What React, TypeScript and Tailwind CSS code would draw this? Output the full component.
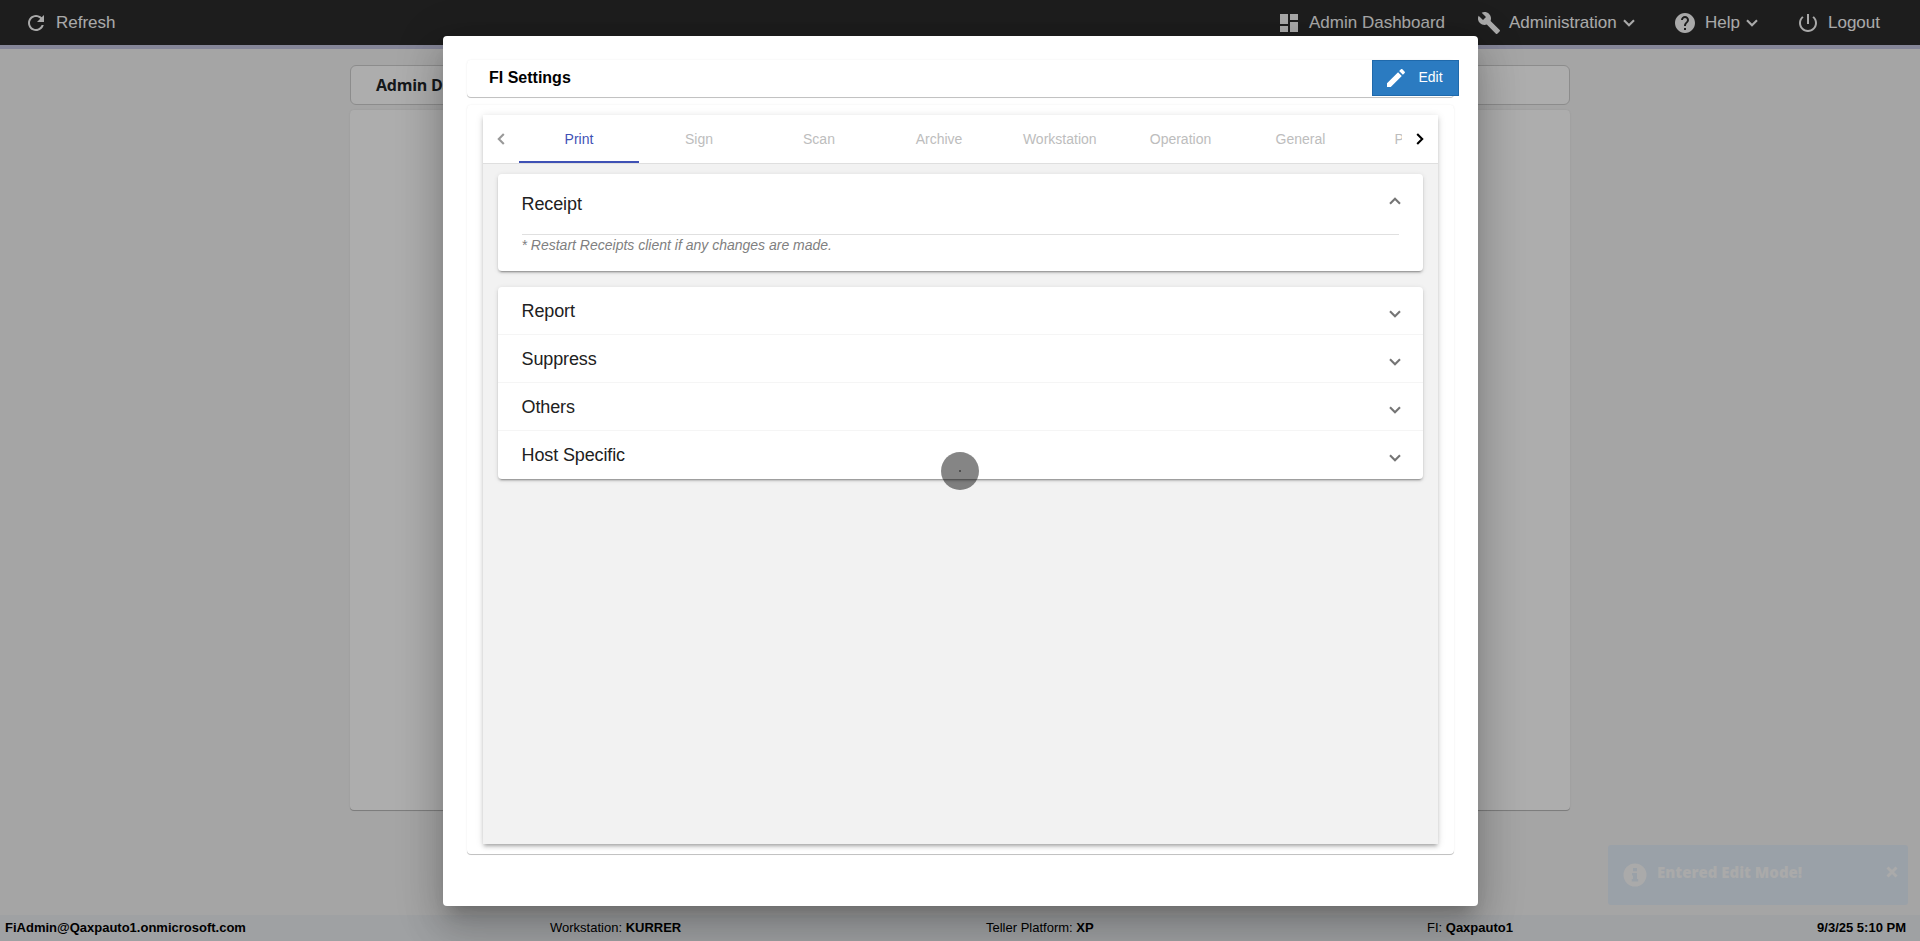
import { type ReactNode } from "react";

const SANS = "font-['Liberation_Sans',Arial,sans-serif]";

function Icon({ d, className }: { d: string; className: string }) {
  return (
    <svg viewBox="0 0 24 24" fill="currentColor" className={"shrink-0 " + className}>
      <path d={d} />
    </svg>
  );
}

const ICONS = {
  refresh:
    "M17.65 6.35C16.2 4.9 14.21 4 12 4c-4.42 0-7.99 3.58-7.99 8s3.57 8 7.99 8c3.73 0 6.84-2.55 7.73-6h-2.08c-.82 2.33-3.04 4-5.65 4-3.31 0-6-2.69-6-6s2.69-6 6-6c1.66 0 3.14.69 4.22 1.78L13 11h7V4l-2.35 2.35z",
  dashboard: "M3 13h8V3H3v10zm0 8h8v-6H3v6zm10 0h8V11h-8v10zm0-18v6h8V3h-8z",
  build:
    "M22.7 19l-9.1-9.1c.9-2.3.4-5-1.5-6.9-2-2-5-2.4-7.4-1.3L9 6 6 9 1.6 4.7C.4 7.1.9 10.1 2.9 12.1c1.9 1.9 4.6 2.4 6.9 1.5l9.1 9.1c.4.4 1 .4 1.4 0l2.3-2.3c.5-.4.5-1.1.1-1.4z",
  help:
    "M12 2C6.48 2 2 6.48 2 12s4.48 10 10 10 10-4.48 10-10S17.52 2 12 2zm1 17h-2v-2h2v2zm2.07-7.75l-.9.92C13.45 12.9 13 13.5 13 15h-2v-.5c0-1.1.45-2.1 1.17-2.83l1.24-1.26c.37-.36.59-.86.59-1.41 0-1.1-.9-2-2-2s-2 .9-2 2H8c0-2.21 1.79-4 4-4s4 1.79 4 4c0 .88-.36 1.68-.93 2.25z",
  power:
    "M13 3h-2v10h2V3zm4.83 2.17l-1.42 1.42C17.99 7.86 19 9.81 19 12c0 3.87-3.13 7-7 7s-7-3.13-7-7c0-2.19 1.01-4.14 2.58-5.42L6.17 5.17C4.23 6.82 3 9.26 3 12c0 4.97 4.03 9 9 9s9-4.03 9-9c0-2.74-1.23-5.18-3.17-6.83z",
  edit:
    "M3 17.25V21h3.75L17.81 9.94l-3.75-3.75L3 17.25zM20.71 7.04c.39-.39.39-1.02 0-1.41l-2.34-2.34c-.39-.39-1.02-.39-1.41 0l-1.83 1.83 3.75 3.75 1.83-1.83z",
};

function Chevron({ className }: { className: string }) {
  return (
    <svg viewBox="0 0 12 8" fill="none" stroke="currentColor" strokeWidth="2.1" className={"h-2 w-3 shrink-0 " + className}>
      <path d="M1 1.2L6 6.2L11 1.2" />
    </svg>
  );
}

function NavItem({ icon, label, menu, className }: { icon: ReactNode; label: string; menu?: boolean; className: string }) {
  return (
    <div className={"flex shrink-0 items-center whitespace-nowrap " + className}>
      {icon}
      <span>{label}</span>
      {menu && <Chevron className="ml-1.5" />}
    </div>
  );
}

const TABS = ["Print", "Sign", "Scan", "Archive", "Workstation", "Operation", "General", "Platform"];
const SECTIONS = ["Report", "Suppress", "Others", "Host Specific"];
const CARD = "shadow-[0_1px_0_0_rgba(0,0,0,0.18),0_1px_1px_0_rgba(0,0,0,0.06),0_0_2px_0_rgba(0,0,0,0.08)]";
const PANEL = "shadow-[0_3px_1px_-2px_rgba(0,0,0,0.2),0_2px_2px_0_rgba(0,0,0,0.14),0_1px_5px_0_rgba(0,0,0,0.12)]";

function Page() {
  return (
    <div className="flex h-full flex-col bg-[#f3f3f3]">
      <header className="flex h-[49px] shrink-0 border-b-4 border-[#c4c6e0] bg-[#2c2c2c] text-[17px] text-[#fafafa]">
        <NavItem className="ml-6" label="Refresh" icon={<Icon d={ICONS.refresh} className="mr-2 size-6" />} />
        <div className="grow" />
        <NavItem className="w-[200px]" label="Admin Dashboard" icon={<Icon d={ICONS.dashboard} className="mr-2 size-6" />} />
        <NavItem className="w-[196px]" label="Administration" menu icon={<Icon d={ICONS.build} className="mr-2 size-6" />} />
        <NavItem className="w-[123px]" label="Help" menu icon={<Icon d={ICONS.help} className="mr-2 size-6" />} />
        <NavItem className="w-[124px]" label="Logout" icon={<Icon d={ICONS.power} className="mr-2 size-6" />} />
      </header>
      <main className="mx-auto flex w-[1220px] grow flex-col pt-4">
        <div className="flex h-10 items-center rounded-md border border-[#cfcfcf] bg-white pl-[25px] font-['Open_Sans',sans-serif] text-base font-bold tracking-[-0.25px] text-[#212529]">
          Admin Dashboard
        </div>
        <div className={"mt-[5px] h-[700px] rounded-[4px] bg-white " + CARD} />
      </main>
      <footer className="flex h-[26px] shrink-0 items-center bg-[#eaedf0] text-[13px] whitespace-nowrap text-black">
        <b className="w-[550px] pl-[5px]">FiAdmin@Qaxpauto1.onmicrosoft.com</b>
        <span className="w-[436px]">Workstation: <b>KURRER</b></span>
        <span className="w-[441px]">Teller Platform: <b>XP</b></span>
        <span className="grow">FI: <b>Qaxpauto1</b></span>
        <b className="pr-[14px]">9/3/25 5:10 PM</b>
      </footer>
    </div>
  );
}

function Toast() {
  return (
    <div className="absolute top-[845px] left-[1608px] flex h-[60px] w-[300px] rounded-[3px] bg-[#9aa1a8] text-[#aaaaaa]">
      <svg viewBox="0 0 24 24" className="mt-[18px] ml-[15px] size-[24px]">
        <circle cx="12" cy="12" r="11.5" fill="currentColor" />
        <path d="M10 5h4v3.2h-4zM9 10h5v6h1.2v2.4H8.8V16H10v-3.6H9z" fill="#9aa1a8" />
      </svg>
      <b className="mt-4 ml-[10px] font-['Open_Sans',sans-serif] text-[15px] leading-[22px] font-extrabold">Entered Edit Mode!</b>
      <svg viewBox="0 0 12 12" className="mt-[21px] mr-2.5 ml-auto size-3">
        <path d="M1.5 1.5l9 9M10.500 1.5l-9 9" stroke="currentColor" strokeWidth="3" />
      </svg>
    </div>
  );
}

function Dialog() {
  return (
    <div className="relative h-[870px] w-[1035px] rounded-[4px] bg-white px-6 pt-6 shadow-[0_11px_15px_-7px_rgba(0,0,0,0.2),0_24px_38px_3px_rgba(0,0,0,0.14),0_9px_46px_8px_rgba(0,0,0,0.12)]">
      <div className={"flex h-[37px] w-[987px] rounded-[4px] bg-white pl-[22.5px] " + CARD}>
        <h1 className="grow text-base leading-[35px] font-bold text-black">FI Settings</h1>
        <button className="-mr-[5px] flex h-9 w-[87px] items-center border border-[#1f69ab] bg-[#2b7bc1] pl-[11px] text-sm text-white">
          <Icon d={ICONS.edit} className="mr-[11px] size-6" />
          <span className="-mt-0.5">Edit</span>
        </button>
      </div>
      <div className={"mt-2 h-[749px] w-[987px] rounded-[4px] bg-white px-4 pt-[10px] " + CARD}>
        <div className="flex h-[729px] flex-col bg-[#f2f2f2] shadow-[0_3px_3px_-2px_rgba(0,0,0,0.2),0_3px_4px_0_rgba(0,0,0,0.14),0_1px_8px_0_rgba(0,0,0,0.12)]">
          <div className="flex h-[49px] shrink-0 border-b border-[#dfdfdf] bg-white text-sm">
            <div className="flex w-9 shrink-0 items-center justify-center text-[#999999]">
              <Chevron className="rotate-90" />
            </div>
            <div className="flex w-[883px] overflow-hidden">
              {TABS.map((tab, i) => (
                <div
                  key={tab}
                  className={
                    i === 0
                      ? "flex w-[120px] shrink-0 items-center justify-center border-b-2 border-[#3f51b5] pt-[2px] pl-px text-[#3f51b5]"
                      : i === 4
                        ? "flex w-[121.500px] shrink-0 items-center justify-center border-b-2 border-transparent pt-[2px] pl-px text-[#bdbdbd]"
                        : "flex w-[120px] shrink-0 items-center justify-center border-b-2 border-transparent pt-[2px] pl-px text-[#bdbdbd]"
                  }
                >
                  {tab}
                </div>
              ))}
            </div>
            <div className="flex w-9 shrink-0 items-center justify-center text-black">
              <Chevron className="-rotate-90" />
            </div>
          </div>
          <div className="px-[15px] pt-[10px] text-[#212121]">
            <div className={"h-[97px] rounded-[4px] bg-white px-6 " + PANEL}>
              <div className="flex h-[61px] items-center justify-between border-b border-[#e0e0e0]">
                <span className="text-lg tracking-[-0.1px]">Receipt</span>
                <Chevron className="-mt-[6px] -mr-0.5 rotate-180 text-[#757575]" />
              </div>
              <p className="text-sm leading-[21px] text-[#808080] italic">* Restart Receipts client if any changes are made.</p>
            </div>
            <div className={"mt-4 rounded-[4px] bg-white " + PANEL}>
              {SECTIONS.map((section, i) => (
                <div
                  key={section}
                  className={
                    i === SECTIONS.length - 1
                      ? "flex h-12 items-center justify-between pr-[22px] pl-6"
                      : "flex h-12 items-center justify-between pr-[22px] pl-6 shadow-[inset_0_-1px_0_#f5f5f5]"
                  }
                >
                  <span className="text-lg tracking-[-0.12px]">{section}</span>
                  <Chevron className="mt-[6px] text-[#757575]" />
                </div>
              ))}
            </div>
          </div>
        </div>
      </div>
    </div>
  );
}

export default function App() {
  return (
    <div className={"relative h-[941px] w-[1920px] overflow-hidden " + SANS}>
      <Page />
      <div className="absolute inset-0 flex items-center justify-center bg-black/32">
        <Dialog />
      </div>
      <Toast />
      <div className="absolute top-[452px] left-[941px] flex size-[38px] items-center justify-center rounded-full bg-black/48">
        <span className="size-0.5 bg-black/40" />
      </div>
    </div>
  );
}
